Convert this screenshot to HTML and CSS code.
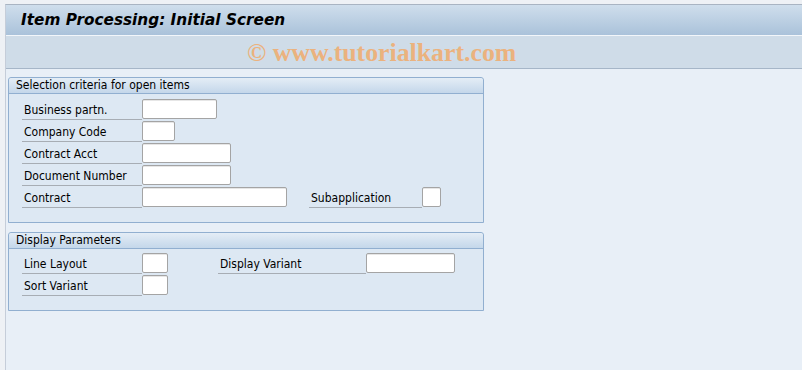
FILE: index.html
```html
<!DOCTYPE html>
<html lang="en">

<head>
    <meta charset="UTF-8">
    <title>Item Processing: Initial Screen</title>
    <link rel="stylesheet" href="styles.css">
</head>

<body>
    <div class="window">
        <div class="title-bar">
            <h1 class="screen-title">Item Processing: Initial Screen</h1>
        </div>
        <div class="toolbar">
            <span class="watermark">© www.tutorialkart.com</span>
        </div>

        <div class="content">
            <!-- Selection criteria -->
            <div class="group">
                <div class="group-header">Selection criteria for open items</div>
                <div class="group-body">
                    <div class="field">
                        <label class="label">Business partn.</label>
                        <input class="input w-75" type="text">
                    </div>
                    <div class="field">
                        <label class="label">Company Code</label>
                        <input class="input w-33" type="text">
                    </div>
                    <div class="field">
                        <label class="label">Contract Acct</label>
                        <input class="input w-89" type="text">
                    </div>
                    <div class="field">
                        <label class="label">Document Number</label>
                        <input class="input w-89" type="text">
                    </div>
                    <div class="field">
                        <label class="label">Contract</label>
                        <input class="input w-145" type="text">
                        <label class="label label-sub">Subapplication</label>
                        <input class="input w-19" type="text">
                    </div>
                </div>
            </div>

            <!-- Display parameters -->
            <div class="group">
                <div class="group-header">Display Parameters</div>
                <div class="group-body group-body-short">
                    <div class="field">
                        <label class="label">Line Layout</label>
                        <input class="input w-26" type="text">
                        <label class="label label-variant">Display Variant</label>
                        <input class="input w-89" type="text">
                    </div>
                    <div class="field">
                        <label class="label">Sort Variant</label>
                        <input class="input w-26" type="text">
                    </div>
                </div>
            </div>
        </div>
    </div>
</body>

</html>
```

FILE: styles.css
```css
body {
    margin: 0;
    padding: 0;
    background-color: #eef1f5;
    font-family: "DejaVu Sans Condensed", Tahoma, sans-serif;
    font-size: 12px;
    color: #000;
}

.window {
    margin: 4px 0 0 5px;
    height: 366px;
    border-top: 1px solid #a9b4c2;
    border-left: 1px solid #c5cdd9;
    background-color: #e8eff7;
}

.title-bar {
    height: 30px;
    padding-left: 15px;
    display: flex;
    align-items: center;
    background: linear-gradient(#cfdeec, #aac2da);
    border-bottom: 1px solid #f2f6fa;
}

.screen-title {
    margin: 0;
    font-family: "DejaVu Sans", Verdana, sans-serif;
    font-size: 15.3px;
    font-weight: bold;
    font-style: italic;
    color: #000;
}

.toolbar {
    height: 32px;
    padding-left: 241px;
    display: flex;
    align-items: center;
    background-color: #cfdce8;
    border-bottom: 1px solid #a6b6c8;
}

.watermark {
    margin-top: 2px;
    font-family: "Liberation Serif", "Times New Roman", serif;
    font-size: 25.8px;
    font-weight: bold;
    color: #ebb27e;
}

.content {
    padding: 8px 0 0 2px;
}

.group {
    width: 474px;
    margin-bottom: 9px;
    border: 1px solid #91afd0;
    border-radius: 3px 3px 0 0;
    background-color: #dde8f3;
}

.group-header {
    height: 15px;
    line-height: 15px;
    padding-left: 7px;
    background: linear-gradient(#e4edf6, #c4d7ea);
    border-bottom: 1px solid #91afd0;
    border-radius: 3px 3px 0 0;
}

.group-body {
    padding: 5px 0 13px 13px;
}

.group-body-short {
    padding-top: 4px;
}

.field {
    display: flex;
    height: 22px;
}

.label {
    box-sizing: border-box;
    width: 120px;
    height: 21px;
    padding: 1px 0 0 2px;
    line-height: 20px;
    border-bottom: 1px solid #a7adb4;
}

.label-sub {
    width: 113px;
    margin-left: 22px;
}

.label-variant {
    width: 148px;
    margin-left: 50px;
}

.input {
    box-sizing: border-box;
    height: 20px;
    margin: 0;
    padding: 0 3px;
    border: 1px solid #a4a4a4;
    border-radius: 2px;
    background-color: #fff;
    box-shadow: inset 0 1px 0 #e6e6e6;
}

.w-19 { width: 19px; }
.w-26 { width: 26px; }
.w-33 { width: 33px; }
.w-75 { width: 75px; }
.w-89 { width: 89px; }
.w-145 { width: 145px; }
```
